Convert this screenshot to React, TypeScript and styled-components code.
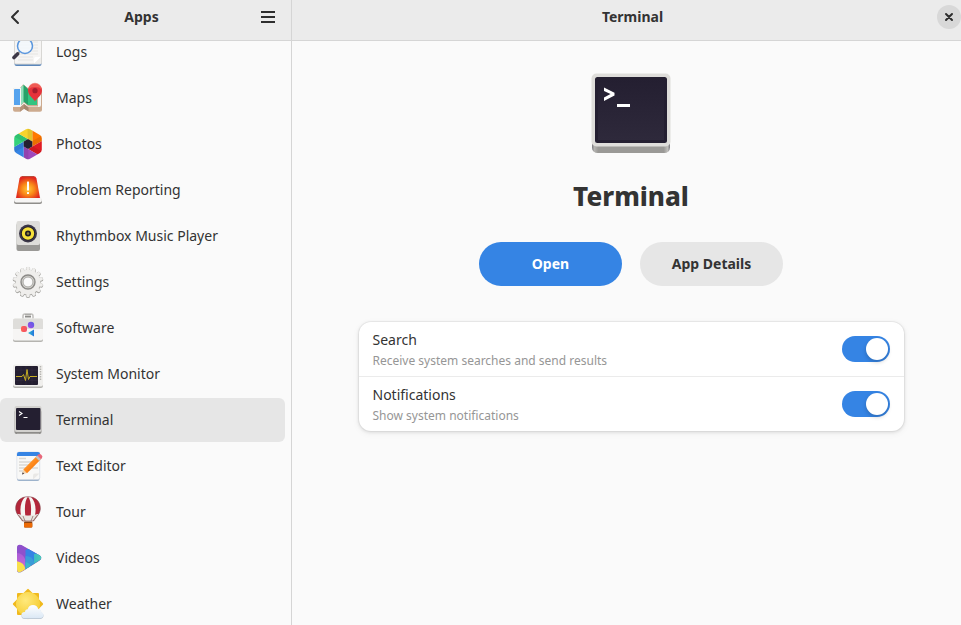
import React, { useState } from "react";
import styled, { createGlobalStyle } from "styled-components";

const GlobalStyle = createGlobalStyle`
  *, *::before, *::after { box-sizing: border-box; }
  body {
    margin: 0;
    background: #fafafa;
    color: #333333;
    font-family: "Noto Sans", "Open Sans", sans-serif;
    font-size: 14px;
    line-height: 20px;
  }
  button { font: inherit; color: inherit; border: 0; background: none; padding: 0; cursor: pointer; }
`;

const Window = styled.div`
  display: flex;
  height: 100vh;
  overflow: hidden;
`;

const Sidebar = styled.aside`
  flex: none;
  display: flex;
  flex-direction: column;
  width: 292px;
  border-right: 1px solid #d5d5d5;
`;

const HeaderBar = styled.header<{ $side?: boolean }>`
  position: relative;
  z-index: 1;
  flex: none;
  display: grid;
  grid-template-columns: 1fr auto 1fr;
  align-items: center;
  height: 41px;
  padding: ${(p) => (p.$side ? "0 8px 6px 0" : "0 0 6px 12px")};
  background: #ebebeb;
  border-bottom: 1px solid #d5d5d5;
`;

const HeaderTitle = styled.h1`
  grid-column: 2;
  margin: 0;
  font-size: 14px;
  font-weight: 700;
  line-height: 20px;
`;

const IconButton = styled.button<{ $end?: boolean }>`
  display: flex;
  align-items: center;
  justify-content: center;
  width: 30px;
  height: 34px;
  justify-self: ${(p) => (p.$end ? "end" : "start")};
`;

const CloseButton = styled.button`
  grid-column: 3;
  justify-self: end;
  display: flex;
  align-items: center;
  justify-content: center;
  width: 24px;
  height: 24px;
  border-radius: 50%;
  background: #d8d8d8;
`;

const ListViewport = styled.nav`
  flex: 1;
  min-height: 0;
  overflow: hidden;
`;

const AppList = styled.ul`
  display: flex;
  flex-direction: column;
  gap: 2px;
  margin: -11px 6px 0 0;
  padding: 0;
  list-style: none;
`;

const AppRow = styled.button<{ $selected?: boolean }>`
  display: flex;
  align-items: center;
  gap: 12px;
  width: 100%;
  height: 44px;
  padding: 0 12px;
  border-radius: 6px;
  text-align: left;
  background: ${(p) => (p.$selected ? "#e6e6e6" : "transparent")};
`;

const Main = styled.main`
  flex: 1;
  min-width: 0;
  display: flex;
  flex-direction: column;
`;

const Content = styled.section`
  display: flex;
  flex-direction: column;
  align-items: center;
  padding: 32px 0 32px 9px;
`;

const AppName = styled.h2`
  margin: 25px 0 0;
  font-size: 26px;
  font-weight: 800;
  line-height: 36px;
`;

const Actions = styled.div`
  display: flex;
  gap: 18px;
  margin-top: 28px;
`;

const PillButton = styled.button<{ $primary?: boolean }>`
  width: 143px;
  height: 44px;
  border-radius: 22px;
  font-weight: 700;
  color: ${(p) => (p.$primary ? "#ffffff" : "#333333")};
  background: ${(p) => (p.$primary ? "#3584e4" : "#e6e6e6")};
`;

const Card = styled.div`
  width: calc(100% - 112px);
  max-width: 545px;
  margin-top: 36px;
  border-radius: 12px;
  background: #ffffff;
  box-shadow: 0 0 0 1px rgba(0, 0, 0, 0.04), 0 1px 3px 1px rgba(0, 0, 0, 0.08), 0 2px 6px 2px rgba(0, 0, 0, 0.03);
`;

const SettingRow = styled.label`
  display: flex;
  align-items: center;
  justify-content: space-between;
  height: 54px;
  padding: 0 14px;
  & + & { height: 55px; border-top: 1px solid #ebebeb; }
`;

const SettingText = styled.span`
  display: flex;
  flex-direction: column;
  gap: 1px;
  padding-top: 3px;
`;

const SettingSubtitle = styled.span`
  color: #969696;
  font-size: 12px;
`;

const Switch = styled.input`
  appearance: none;
  display: flex;
  align-items: center;
  flex: none;
  width: 48px;
  height: 26px;
  margin: 0;
  padding: 2px;
  border-radius: 13px;
  background: #e1e1e1;
  cursor: pointer;
  &::before {
    content: "";
    width: 22px;
    height: 22px;
    border-radius: 50%;
    background: #ffffff;
    box-shadow: 0 2px 4px rgba(0, 0, 0, 0.2);
  }
  &:checked { background: #3584e4; justify-content: flex-end; }
`;

const Glyph = styled.svg<{ $size: number }>`
  flex: none;
  display: block;
  width: ${(p) => p.$size}px;
  height: ${(p) => p.$size}px;
`;

const AppIcon = ({ children }: { children: React.ReactNode }) => (
  <Glyph $size={32} viewBox="0 0 32 32" aria-hidden="true">{children}</Glyph>
);

const LogsIcon = () => (
  <AppIcon>
    <rect x="2.500" y="3" width="27" height="27" rx="2" fill="#5b87bb" />
    <rect x="2" y="1" width="28" height="27.500" rx="2" fill="#d8d7d4" />
    <rect x="3" y="2" width="26" height="25.500" rx="1" fill="#f6f5f4" />
    <path d="M6 6h20M6 9h20M6 12h20M6 15h20M6 18h20M6 21h15M6 24h15" stroke="#e6e5e2" />
    <path d="M22 27.500v-4.500a2 2 0 0 1 2-2h5z" fill="#ffffff" />
    <path d="M22 27.500L29 21v6.500z" fill="#eeedeb" />
    <path d="M7.500 16L5.500 18" stroke="#9a9996" strokeWidth="2" />
    <path d="M5.500 18L2 21.500" stroke="#3d3846" strokeWidth="3.600" strokeLinecap="round" />
    <circle cx="13" cy="10" r="7.500" fill="#f3f8fd" fillOpacity=".85" stroke="#5a96dd" strokeWidth="1.500" />
  </AppIcon>
);

const MapsIcon = () => (
  <AppIcon>
    <path d="M1 7.500q0-1.500 1.500-1.500L8 6l3-3.500L16 6l12-.500q2 0 2 2V28q0 1.800-2 1.800H17l-5-3-4 3H3q-2 0-2-2z" fill="#cdab8f" />
    <path d="M1 7q0-1.500 1.500-1.500L9 6v17.500l3-3 4.500 4H26V12h3v11q0 2-2 2H16.500L12 22l-3.500 3H1z" fill="#f6f5f4" />
    <path d="M2 8q0-1 1-1h5v16H2z" fill="#55a3ee" />
    <path d="M9 5l3-2.500V20l-3 3z" fill="#8fdfba" />
    <path d="M11.500 2.500L16 7v16l-4.500-3.500z" fill="#26a269" />
    <path d="M16 7h9v16h-9z" fill="#33c481" />
    <path d="M8 25.500l4-3.500v4.800l-4 3z" fill="#b5937a" />
    <path d="M12 22l4.500 3.500v4L12 26.800z" fill="#a5876f" />
    <path d="M23 19.500c-1.500-3-7-6-7-11a7 7 0 0 1 14 0c0 5-5.500 8-7 11z" fill="#e6323b" />
    <path d="M16.200 7.500a6.800 6.800 0 0 1 13.600 0 9 7 0 0 0-13.600 0z" fill="#f26b60" opacity=".7" />
    <circle cx="23" cy="8.700" r="2.600" fill="#a51d2d" />
  </AppIcon>
);

const shutterBlades = ["#ff7800", "#e01b24", "#9f48bd", "#3584e4", "#33d17a", "#f6d32d"];

const PhotosIcon = () => (
  <AppIcon>
    <defs>
      <clipPath id="photos-hex">
        <path d="M14 1.300q2-1.100 4 0l9.900 5.800q1.900 1.100 1.900 3.200v11.400q0 2.100-1.900 3.200L18 30.700q-2 1.100-4 0l-9.900-5.800q-1.900-1.100-1.900-3.200V10.300q0-2.100 1.900-3.200z" />
      </clipPath>
    </defs>
    <g clipPath="url(#photos-hex)">
      {shutterBlades.map((color, i) => (
        <g key={color} transform={`rotate(${i * 60} 16 16)`}>
          <path d="M20.300 18.500V-10L45 4.300z" fill={color} />
          <path d="M20.300 18.500V13L36 4v6z" fill="#000000" opacity=".08" />
        </g>
      ))}
    </g>
    <path d="M16 11l4.300 2.500v5L16 21l-4.300-2.500v-5z" fill="#241f31" />
  </AppIcon>
);

const ReportIcon = () => (
  <AppIcon>
    <defs>
      <radialGradient id="alarm-glow" cx=".5" cy=".6" r=".58">
        <stop offset="0" stopColor="#ffc93c" />
        <stop offset=".45" stopColor="#fa8a17" />
        <stop offset=".95" stopColor="#e0281f" />
      </radialGradient>
    </defs>
    <path d="M5 21.500h22l3 5v1.500q0 2-2 2H4q-2 0-2-2v-1.500z" fill="#8e8d8a" />
    <path d="M4.500 22h23q2.500 2 2.500 4t-2 2.500H4q-2-.500-2-2.500t2.500-4z" fill="#f6f5f4" />
    <path d="M7.500 4.500Q8 2 10.500 2h11q2.500 0 3 2.500L28 24H4z" fill="url(#alarm-glow)" />
    <path d="M10 2.500h12" stroke="#b84c39" />
    <rect x="15" y="7.500" width="2" height="9" rx=".500" fill="#ffffff" />
    <rect x="15" y="18" width="2" height="2" rx=".500" fill="#ffffff" />
  </AppIcon>
);

const MusicIcon = () => (
  <AppIcon>
    <rect x="4.500" y="3" width="23.500" height="28" rx="2" fill="#9a9996" />
    <rect x="4.500" y="1" width="23.500" height="24" rx="2" fill="#deddda" />
    <circle cx="16" cy="13.500" r="9" fill="#3b3748" />
    <circle cx="16" cy="13.500" r="7" fill="#1e1a26" />
    <circle cx="16" cy="13.500" r="4.600" fill="none" stroke="#f6e03a" strokeWidth="3.200" />
    <circle cx="16" cy="13.500" r="1.300" fill="#8f8538" />
  </AppIcon>
);

const teeth = Array.from({ length: 14 }, (_, i) => (i * 360) / 14);

const SettingsIcon = () => (
  <AppIcon>
    {teeth.map((a) => (
      <rect key={`s${a}`} x="13.900" y="1" width="4.200" height="5" rx="1.800" transform={`rotate(${a} 16 16.500)`} fill="#a09f9b" />
    ))}
    <circle cx="16" cy="16.700" r="12.800" fill="#a9a8a4" />
    {teeth.map((a) => (
      <rect key={a} x="14.300" y=".800" width="3.400" height="5" rx="1.500" transform={`rotate(${a} 16 16)`} fill="#efeeec" />
    ))}
    <circle cx="16" cy="16" r="12.300" fill="#efeeec" />
    <circle cx="16" cy="16" r="7" fill="#d5d4d0" stroke="#8b8a87" strokeWidth="1.400" />
    <circle cx="16" cy="16" r="5" fill="#fafafa" stroke="#a8a7a3" />
  </AppIcon>
);

const SoftwareIcon = () => (
  <AppIcon>
    <defs>
      <linearGradient id="bag-a" x1="0" x2="1"><stop stopColor="#ff6150" /><stop offset="1" stopColor="#f0506c" /></linearGradient>
      <linearGradient id="bag-b" x1="0" x2="1" y1="1" y2="0"><stop stopColor="#a34be4" /><stop offset="1" stopColor="#565fe6" /></linearGradient>
      <linearGradient id="bag-c" x1="0" x2="1"><stop stopColor="#2dbfd0" /><stop offset="1" stopColor="#2474dd" /></linearGradient>
    </defs>
    <path d="M11 7V4q0-2 2-2h6q2 0 2 2v3" fill="none" stroke="#c0bfbc" strokeWidth="1.500" />
    <path d="M13 4h6" stroke="#8d8c89" strokeWidth="3" />
    <path d="M13 3.500h6" stroke="#cfcecb" />
    <rect x="1" y="7" width="30" height="23" rx="2" fill="#b5b4b0" />
    <rect x="1" y="6.500" width="30" height="22" rx="2" fill="#f6f5f4" />
    <path d="M1 17V8.500q0-2 2-2h26q2 0 2 2V17z" fill="#deddda" />
    <rect x="9" y="14" width="6" height="6" rx="2" fill="url(#bag-a)" />
    <circle cx="19" cy="13" r="3.200" fill="url(#bag-b)" />
    <path d="M16 21l6-3.500v7z" fill="url(#bag-c)" />
  </AppIcon>
);

const MonitorIcon = () => (
  <AppIcon>
    <rect x="1" y="8" width="30" height="22" rx="2" fill="#b5b4b0" />
    <rect x="1" y="6.500" width="30" height="22" rx="2" fill="#f0efed" />
    <rect x="3" y="8" width="23" height="19" rx="1" fill="#241f31" />
    <path d="M9 8v19M14 8v19M20 8v19M3 12h23M3 22.500h23" stroke="#322b40" strokeWidth=".600" />
    <path d="M4 18.500h6l1.500-2 2 6L15 11.500l1.500 10 1.500-3h7" fill="none" stroke="#c6ad24" strokeWidth="1" strokeLinejoin="round" />
    <path d="M28.500 8v14" stroke="#b5b4b0" strokeWidth="1.500" strokeDasharray="1.500 1" />
  </AppIcon>
);

const TerminalIcon = () => (
  <AppIcon>
    <rect x="2.500" y="6" width="27" height="24" rx="2" fill="#8d8c89" />
    <path d="M5 29.500h22" stroke="#a5a4a1" />
    <rect x="2.500" y="2" width="27" height="26" rx="2" fill="#d2d1ce" />
    <rect x="4" y="4" width="24.500" height="22" rx="1" fill="#241f31" />
    <path d="M7 7.500l3 2-3 2M11.500 13.500h4" fill="none" stroke="#ffffff" strokeWidth="1.100" />
  </AppIcon>
);

const EditorIcon = () => (
  <AppIcon>
    <defs>
      <linearGradient id="pencil" x1="0" y1="0" x2="1" y2="1"><stop stopColor="#ffb150" /><stop offset=".5" stopColor="#ff8a1c" /><stop offset="1" stopColor="#d95c00" /></linearGradient>
    </defs>
    <rect x="5" y="5" width="22.500" height="26" rx="2" fill="#9db3cc" />
    <rect x="4.800" y="2" width="23" height="27.500" rx="2" fill="#f8f8f7" stroke="#d3d9e0" strokeWidth=".600" />
    <path d="M5 6V4q0-2 2-2h19q2 0 2 2v2z" fill="#3584e4" />
    <path d="M7 8.500h7M7 12h14M7 15h10M7 18h8M7 21h4M20 18h6" stroke="#d9d8d5" strokeWidth="1.700" />
    <path d="M21 29.500v-4q0-2 2-2h4.500z" fill="#e9e8e6" />
    <path d="M10 24.500l1.500-5L15 23z" fill="#f2d3ad" />
    <path d="M10 24.500l.700-2.200 1.500 1.500z" fill="#3d3846" />
    <path d="M11.300 19.500L25 5.800l3.700 3.700L15 23.200z" fill="url(#pencil)" />
    <path d="M23.500 7.300l1.700-1.700 3.700 3.700-1.700 1.700z" fill="#c7c3c0" />
    <path d="M25.200 5.600l1-1q1.800-1.500 3.300.400 1.700 1.500.400 3.300l-1 1z" fill="#e8677a" />
  </AppIcon>
);

const TourIcon = () => (
  <AppIcon>
    <path d="M3.700 12.500C3.700 5 9 .700 16 .700s12.300 4.300 12.300 11.800c0 5-4 8.500-6.800 12.500h-11C7.700 21 3.700 17.500 3.700 12.500z" fill="#f6f5f3" />
    <path d="M13 1C7 2 3.700 6.500 3.700 12.500c0 2 .600 3.800 1.600 5.500l3.700 1C7.500 12 9 5 13 1z" fill="#b3263a" />
    <path d="M16 .700c-2.800 3-3.700 10-2.700 19h5.400c1-9 .100-16-2.700-19z" fill="#b3263a" />
    <path d="M19 1c6 1 9.300 5.500 9.300 11.500 0 2-.600 3.800-1.600 5.500L23 19c1.500-7 0-14-4-18z" fill="#b3263a" />
    <path d="M5.500 18q10.500 3.500 21 0l-4.200 7H9.700z" fill="#e9e5e1" />
    <path d="M6.500 19l4.500 6M25.500 19L21 25M11 20l2 5M21 20l-2 5" stroke="#9d7f78" strokeWidth=".900" />
    <path d="M3.700 12.500C3.700 5 9 .700 16 .700s12.300 4.300 12.300 11.800c0 5-4 8.500-6.800 12.500h-11C7.700 21 3.700 17.500 3.700 12.500z" fill="none" stroke="#7d3b41" strokeWidth=".600" />
    <rect x="12" y="25.500" width="8.300" height="6" rx="1" fill="#8b4310" />
    <rect x="12" y="27" width="8.300" height="4.500" rx="1" fill="#ec6a06" />
  </AppIcon>
);

const VideosIcon = () => (
  <AppIcon>
    <defs>
      <clipPath id="play-clip">
        <path d="M5 6q0-4.500 4.500-3L27 13q4.500 2.700 0 5.500L9.500 29.500Q5 31.500 5 27z" />
      </clipPath>
      <linearGradient id="play-teal" x1="0" x2="1"><stop stopColor="#3cbcc4" /><stop offset="1" stopColor="#55d3ad" /></linearGradient>
      <linearGradient id="play-pink" x1="0" x2="0" y1="0" y2="1"><stop stopColor="#a95bd6" /><stop offset="1" stopColor="#cf6cd8" /></linearGradient>
    </defs>
    <path d="M5 6.500q0-4.500 4.500-3L27 13.500q4.500 2.700 0 5.500L9.500 30Q5 32 5 27.500z" fill="#8a8f98" />
    <g clipPath="url(#play-clip)">
      <path d="M4 1h28v30H4z" fill="#8f50cc" />
      <path d="M4 11q7 0 9.500 7v12H4z" fill="url(#play-pink)" />
      <path d="M4 19q8 1 9.500 8v4H4z" fill="#f8e04b" />
      <path d="M13.500 8q5-3 10 1l8 3v6l-18 12z" fill="#3584e4" />
      <path d="M13.500 14q7 0 8.500 6v10h-8.500z" fill="#3a9cd8" />
      <path d="M13.500 20q6 1 6 8l-6 3z" fill="#3bb9c8" />
      <path d="M22 12q6-1 10 3v5l-10 6z" fill="url(#play-teal)" />
    </g>
  </AppIcon>
);

const WeatherIcon = () => (
  <AppIcon>
    <defs>
      <radialGradient id="sun" cx=".4" cy=".35" r=".7"><stop stopColor="#ffe97c" /><stop offset="1" stopColor="#f6cd33" /></radialGradient>
      <linearGradient id="cloud" x1="0" y1="0" x2="0" y2="1"><stop stopColor="#ffffff" /><stop offset="1" stopColor="#dbe8f5" /></linearGradient>
    </defs>
    <rect x="5" y="5" width="22" height="22" rx="1" fill="#f0b91d" />
    <rect x="5" y="5" width="22" height="22" rx="1" transform="rotate(45 16 16)" fill="#f0b91d" />
    <circle cx="16" cy="16" r="12" fill="url(#sun)" />
    <path d="M13 31q-3.500 0-3.500-3.300T13 24.500q0-2.500 2.700-2.800Q17 17.500 21 17.500t5.200 4q3 .300 3 3 2.300.500 2.300 3T28.500 31z" fill="#b7c3cf" />
    <path d="M13 30.200q-3.500 0-3.500-3.200T13 24q0-2.500 2.700-2.800Q17 17 21 17t5.200 4q3 .300 3 3 2.300.500 2.300 3t-3 3.200z" fill="url(#cloud)" />
  </AppIcon>
);

const LargeTerminalIcon = () => (
  <Glyph $size={80} viewBox="0 0 80 80" role="img" aria-label="Terminal icon">
    <defs>
      <linearGradient id="term-base" x1="0" x2="1">
        <stop stopColor="#77767b" />
        <stop offset=".03" stopColor="#b5b4b1" />
        <stop offset=".08" stopColor="#9a9996" />
        <stop offset=".92" stopColor="#9a9996" />
        <stop offset=".97" stopColor="#c0bfbc" />
        <stop offset="1" stopColor="#77767b" />
      </linearGradient>
      <linearGradient id="term-screen" x1="0" y1="0" x2="0" y2="1">
        <stop stopColor="#241f31" /><stop offset="1" stopColor="#2e293b" />
      </linearGradient>
    </defs>
    <rect x="1" y="40" width="78" height="40" rx="5.500" fill="url(#term-base)" />
    <rect x=".500" y=".500" width="79" height="73" rx="5" fill="#deddda" />
    <rect x="4" y="4" width="72" height="66" rx="2.500" fill="#241f31" />
    <rect x="7" y="6" width="66" height="61" fill="url(#term-screen)" />
    <path d="M13 14.500v3.500l6.500 3-6.500 3.500V28l10.500-5.500v-2.700z" fill="#ffffff" />
    <rect x="26" y="31" width="13" height="3" fill="#ffffff" />
  </Glyph>
);

const apps = [
  { name: "Logs", Icon: LogsIcon },
  { name: "Maps", Icon: MapsIcon },
  { name: "Photos", Icon: PhotosIcon },
  { name: "Problem Reporting", Icon: ReportIcon },
  { name: "Rhythmbox Music Player", Icon: MusicIcon },
  { name: "Settings", Icon: SettingsIcon },
  { name: "Software", Icon: SoftwareIcon },
  { name: "System Monitor", Icon: MonitorIcon },
  { name: "Terminal", Icon: TerminalIcon },
  { name: "Text Editor", Icon: EditorIcon },
  { name: "Tour", Icon: TourIcon },
  { name: "Videos", Icon: VideosIcon },
  { name: "Weather", Icon: WeatherIcon },
];

const settings = [
  { id: "search", title: "Search", subtitle: "Receive system searches and send results" },
  { id: "notifications", title: "Notifications", subtitle: "Show system notifications" },
];

export default function App() {
  const [enabled, setEnabled] = useState<Record<string, boolean>>({ search: true, notifications: true });

  return (
    <>
      <GlobalStyle />
      <Window>
        <Sidebar>
          <HeaderBar $side>
            <IconButton aria-label="Back">
              <Glyph $size={16} viewBox="0 0 16 16" aria-hidden="true">
                <path d="M11 2L5 8l6 6" fill="none" stroke="#2e2e2e" strokeWidth="2" strokeLinecap="round" strokeLinejoin="round" />
              </Glyph>
            </IconButton>
            <HeaderTitle>Apps</HeaderTitle>
            <IconButton $end aria-label="Menu">
              <Glyph $size={16} viewBox="0 0 16 16" aria-hidden="true">
                <path d="M1 3h14M1 8h14M1 13h14" stroke="#2e2e2e" strokeWidth="2" />
              </Glyph>
            </IconButton>
          </HeaderBar>
          <ListViewport aria-label="Apps">
            <AppList>
              {apps.map(({ name, Icon }) => (
                <li key={name}>
                  <AppRow $selected={name === "Terminal"} aria-current={name === "Terminal" ? "page" : undefined}>
                    <Icon />
                    {name}
                  </AppRow>
                </li>
              ))}
            </AppList>
          </ListViewport>
        </Sidebar>
        <Main>
          <HeaderBar>
            <HeaderTitle>Terminal</HeaderTitle>
            <CloseButton aria-label="Close">
              <Glyph $size={16} viewBox="0 0 16 16" aria-hidden="true">
                <path d="M5 5l6 6M11 5l-6 6" stroke="#2e2e2e" strokeWidth="2" strokeLinecap="round" />
              </Glyph>
            </CloseButton>
          </HeaderBar>
          <Content>
            <LargeTerminalIcon />
            <AppName>Terminal</AppName>
            <Actions>
              <PillButton $primary>Open</PillButton>
              <PillButton>App Details</PillButton>
            </Actions>
            <Card>
              {settings.map(({ id, title, subtitle }) => (
                <SettingRow key={id} htmlFor={id}>
                  <SettingText>
                    <span>{title}</span>
                    <SettingSubtitle>{subtitle}</SettingSubtitle>
                  </SettingText>
                  <Switch
                    id={id}
                    type="checkbox"
                    role="switch"
                    checked={enabled[id]}
                    onChange={(e) => setEnabled({ ...enabled, [id]: e.target.checked })}
                  />
                </SettingRow>
              ))}
            </Card>
          </Content>
        </Main>
      </Window>
    </>
  );
}
